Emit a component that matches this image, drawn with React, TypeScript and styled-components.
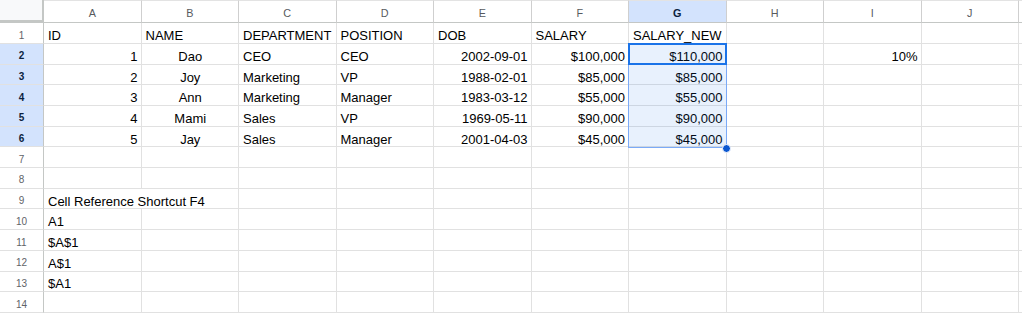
import React from 'react';
import styled, { createGlobalStyle, css } from 'styled-components';

const RH_W = 44;
const COL_W = 97.5;
const HEAD_H = 23.3;
const ROW_H = 20.7;
const COLS = ['A', 'B', 'C', 'D', 'E', 'F', 'G', 'H', 'I', 'J'];
const SEL_COL = 6;
const SEL_ROWS = [2, 3, 4, 5, 6];

type Align = 'left' | 'right' | 'center';
type CellData = { v: string; a?: Align; span?: number };

const ROWS: Record<number, (CellData | null)[]> = {
  1: [{ v: 'ID' }, { v: 'NAME' }, { v: 'DEPARTMENT' }, { v: 'POSITION' }, { v: 'DOB' }, { v: 'SALARY' }, { v: 'SALARY_NEW' }],
  2: [{ v: '1', a: 'right' }, { v: 'Dao', a: 'center' }, { v: 'CEO' }, { v: 'CEO' }, { v: '2002-09-01', a: 'right' }, { v: '$100,000', a: 'right' }, { v: '$110,000', a: 'right' }, null, { v: '10%', a: 'right' }],
  3: [{ v: '2', a: 'right' }, { v: 'Joy', a: 'center' }, { v: 'Marketing' }, { v: 'VP' }, { v: '1988-02-01', a: 'right' }, { v: '$85,000', a: 'right' }, { v: '$85,000', a: 'right' }],
  4: [{ v: '3', a: 'right' }, { v: 'Ann', a: 'center' }, { v: 'Marketing' }, { v: 'Manager' }, { v: '1983-03-12', a: 'right' }, { v: '$55,000', a: 'right' }, { v: '$55,000', a: 'right' }],
  5: [{ v: '4', a: 'right' }, { v: 'Mami', a: 'center' }, { v: 'Sales' }, { v: 'VP' }, { v: '1969-05-11', a: 'right' }, { v: '$90,000', a: 'right' }, { v: '$90,000', a: 'right' }],
  6: [{ v: '5', a: 'right' }, { v: 'Jay', a: 'center' }, { v: 'Sales' }, { v: 'Manager' }, { v: '2001-04-03', a: 'right' }, { v: '$45,000', a: 'right' }, { v: '$45,000', a: 'right' }],
  9: [{ v: 'Cell Reference Shortcut F4', span: 2 }],
  10: [{ v: 'A1' }],
  11: [{ v: '$A$1' }],
  12: [{ v: 'A$1' }],
  13: [{ v: '$A1' }],
};

const GlobalStyle = createGlobalStyle`
  html, body { margin: 0; padding: 0; background: #ffffff; }
  body { font-family: "Liberation Sans", Arial, sans-serif; }
`;

const Sheet = styled.div`
  position: relative;
  width: 1022px;
  height: 314px;
  overflow: hidden;
  display: grid;
  grid-template-columns: ${RH_W}px repeat(10, ${COL_W}px) 1fr;
  grid-template-rows: ${HEAD_H}px repeat(14, ${ROW_H}px);
  background: #ffffff;
`;

const Corner = styled.div`
  box-sizing: border-box;
  background: #f8f9fa;
  border-right: 3px solid #c4c7c5;
  border-bottom: 3px solid #c4c7c5;
  margin-right: -1px;
`;

const ColHead = styled.div<{ $sel?: boolean }>`
  box-sizing: border-box;
  display: flex;
  align-items: center;
  justify-content: center;
  padding-top: 3px;
  font-size: 10.8px;
  color: #575a5e;
  background: #ffffff;
  border-top: 1px solid #e3e3e3;
  border-right: 1px solid #cfcfcf;
  border-bottom: 1px solid #c4c7c5;
  ${(p) =>
    p.$sel &&
    css`
      background: #d3e3fd;
      color: #0b1f3f;
      font-weight: 700;
    `}
`;

const HeadFiller = styled.div`
  box-sizing: border-box;
  background: #ffffff;
  border-top: 1px solid #e3e3e3;
  border-bottom: 1px solid #c4c7c5;
`;

const RowHead = styled.div<{ $sel?: boolean }>`
  box-sizing: border-box;
  display: flex;
  align-items: center;
  justify-content: center;
  padding-top: 4px;
  font-size: 10px;
  color: #5f6368;
  background: #ffffff;
  border-right: 1px solid #c4c7c5;
  border-bottom: 1px solid #e1e1e1;
  ${(p) =>
    p.$sel &&
    css`
      background: #d3e3fd;
      color: #0b1f3f;
      font-weight: 700;
    `}
`;

const Cell = styled.div<{ $align: Align; $span: number }>`
  box-sizing: border-box;
  grid-column: span ${(p) => p.$span};
  display: flex;
  align-items: center;
  justify-content: ${(p) => (p.$align === 'right' ? 'flex-end' : p.$align === 'center' ? 'center' : 'flex-start')};
  padding: 5px 3px 0 4px;
  font-size: 13px;
  color: #000000;
  white-space: nowrap;
  overflow: visible;
  border-right: 1px solid #e1e1e1;
  border-bottom: 1px solid #e1e1e1;
`;

const Filler = styled.div`
  box-sizing: border-box;
  border-bottom: 1px solid #e1e1e1;
`;

const Range = styled.div`
  position: absolute;
  box-sizing: border-box;
  left: ${RH_W + SEL_COL * COL_W - 1}px;
  top: ${HEAD_H + ROW_H - 1}px;
  width: ${COL_W + 1}px;
  height: ${SEL_ROWS.length * ROW_H + 1}px;
  background: rgba(26, 115, 232, 0.1);
  border: 1px solid #7baaf7;
  pointer-events: none;
`;

const Active = styled.div`
  position: absolute;
  box-sizing: border-box;
  left: ${RH_W + SEL_COL * COL_W - 1}px;
  top: ${HEAD_H + ROW_H - 1}px;
  width: ${COL_W + 1}px;
  height: ${ROW_H + 1}px;
  border: 2px solid #1a73e8;
  pointer-events: none;
`;

const Handle = styled.div`
  position: absolute;
  left: ${RH_W + (SEL_COL + 1) * COL_W - 4.5}px;
  top: ${HEAD_H + (SEL_ROWS.length + 1) * ROW_H - 4}px;
  width: 7px;
  height: 7px;
  border-radius: 50%;
  background: #0b57d0;
  border: 1px solid #ffffff;
  pointer-events: none;
`;

function renderRow(r: number) {
  const items = ROWS[r] || [];
  const out: React.ReactNode[] = [];
  let c = 0;
  while (c < COLS.length) {
    const d = items[c];
    const span = d && d.span ? d.span : 1;
    out.push(
      <Cell key={`${r}-${c}`} $align={(d && d.a) || 'left'} $span={span}>
        {d ? d.v : ''}
      </Cell>
    );
    c += span;
  }
  return out;
}

export default function App() {
  const rowNums = Array.from({ length: 14 }, (_, i) => i + 1);
  return (
    <>
      <GlobalStyle />
      <Sheet>
        <Corner />
        {COLS.map((c, i) => (
          <ColHead key={c} $sel={i === SEL_COL}>
            {c}
          </ColHead>
        ))}
        <HeadFiller />
        {rowNums.map((r) => (
          <React.Fragment key={r}>
            <RowHead $sel={SEL_ROWS.includes(r)}>{r}</RowHead>
            {renderRow(r)}
            <Filler />
          </React.Fragment>
        ))}
        <Range />
        <Active />
        <Handle />
      </Sheet>
    </>
  );
}
